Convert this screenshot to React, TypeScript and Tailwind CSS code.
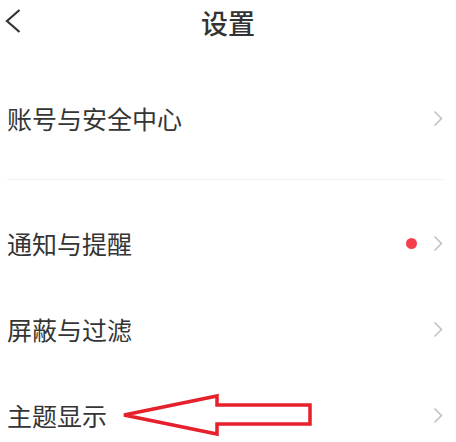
import React from "react";

const FONT = { fontFamily: '"Noto Sans CJK SC", "Noto Sans", sans-serif' };

function Chevron() {
  return (
    <svg width="10" height="17" viewBox="0 0 10 17" className="shrink-0">
      <path d="M1.5 1.5 L8.5 8.5 L1.5 15.5" fill="none" stroke="#c2c2c2" strokeWidth="1.6" />
    </svg>
  );
}

function Row({ label, dot }: { label: string; dot?: boolean }) {
  return (
    <div className="flex h-[86px] items-center justify-between pl-[7px] pr-[13px]">
      <span className="text-[25px] leading-none text-[#353535]">{label}</span>
      <div className="flex items-center gap-[16px]">
        {dot && <span className="h-[11px] w-[11px] rounded-full bg-[#f63f4c]" />}
        <Chevron />
      </div>
    </div>
  );
}

export default function App() {
  return (
    <div className="relative h-[442px] w-[456px] overflow-hidden bg-white" style={FONT}>
      {/* Header */}
      <div className="relative flex h-[44px] items-center justify-center">
        <svg width="18" height="26" viewBox="0 0 18 26" className="absolute left-[4px] top-[8px]">
          <path d="M15.5 2 L3 13 L15.5 24" fill="none" stroke="#333333" strokeWidth="2.2" />
        </svg>
        <span className="text-[27px] font-medium leading-none text-[#333333]">设置</span>
      </div>

      <div className="h-[31px]" />
      <Row label="账号与安全中心" />
      <div className="h-[18px]" />
      <div className="ml-[7px] mr-[13px] h-px bg-[#efefef]" />
      <div className="h-[20px]" />
      <Row label="通知与提醒" dot />
      <Row label="屏蔽与过滤" />
      <Row label="主题显示" />

      {/* annotation arrow */}
      <svg width="456" height="442" className="pointer-events-none absolute left-0 top-0">
        <polygon
          points="124,415 217,396 217,405 310,405 310,424 217,424 217,434"
          fill="none"
          stroke="#e6212b"
          strokeWidth="3.5"
          strokeLinejoin="miter"
        />
      </svg>
    </div>
  );
}
